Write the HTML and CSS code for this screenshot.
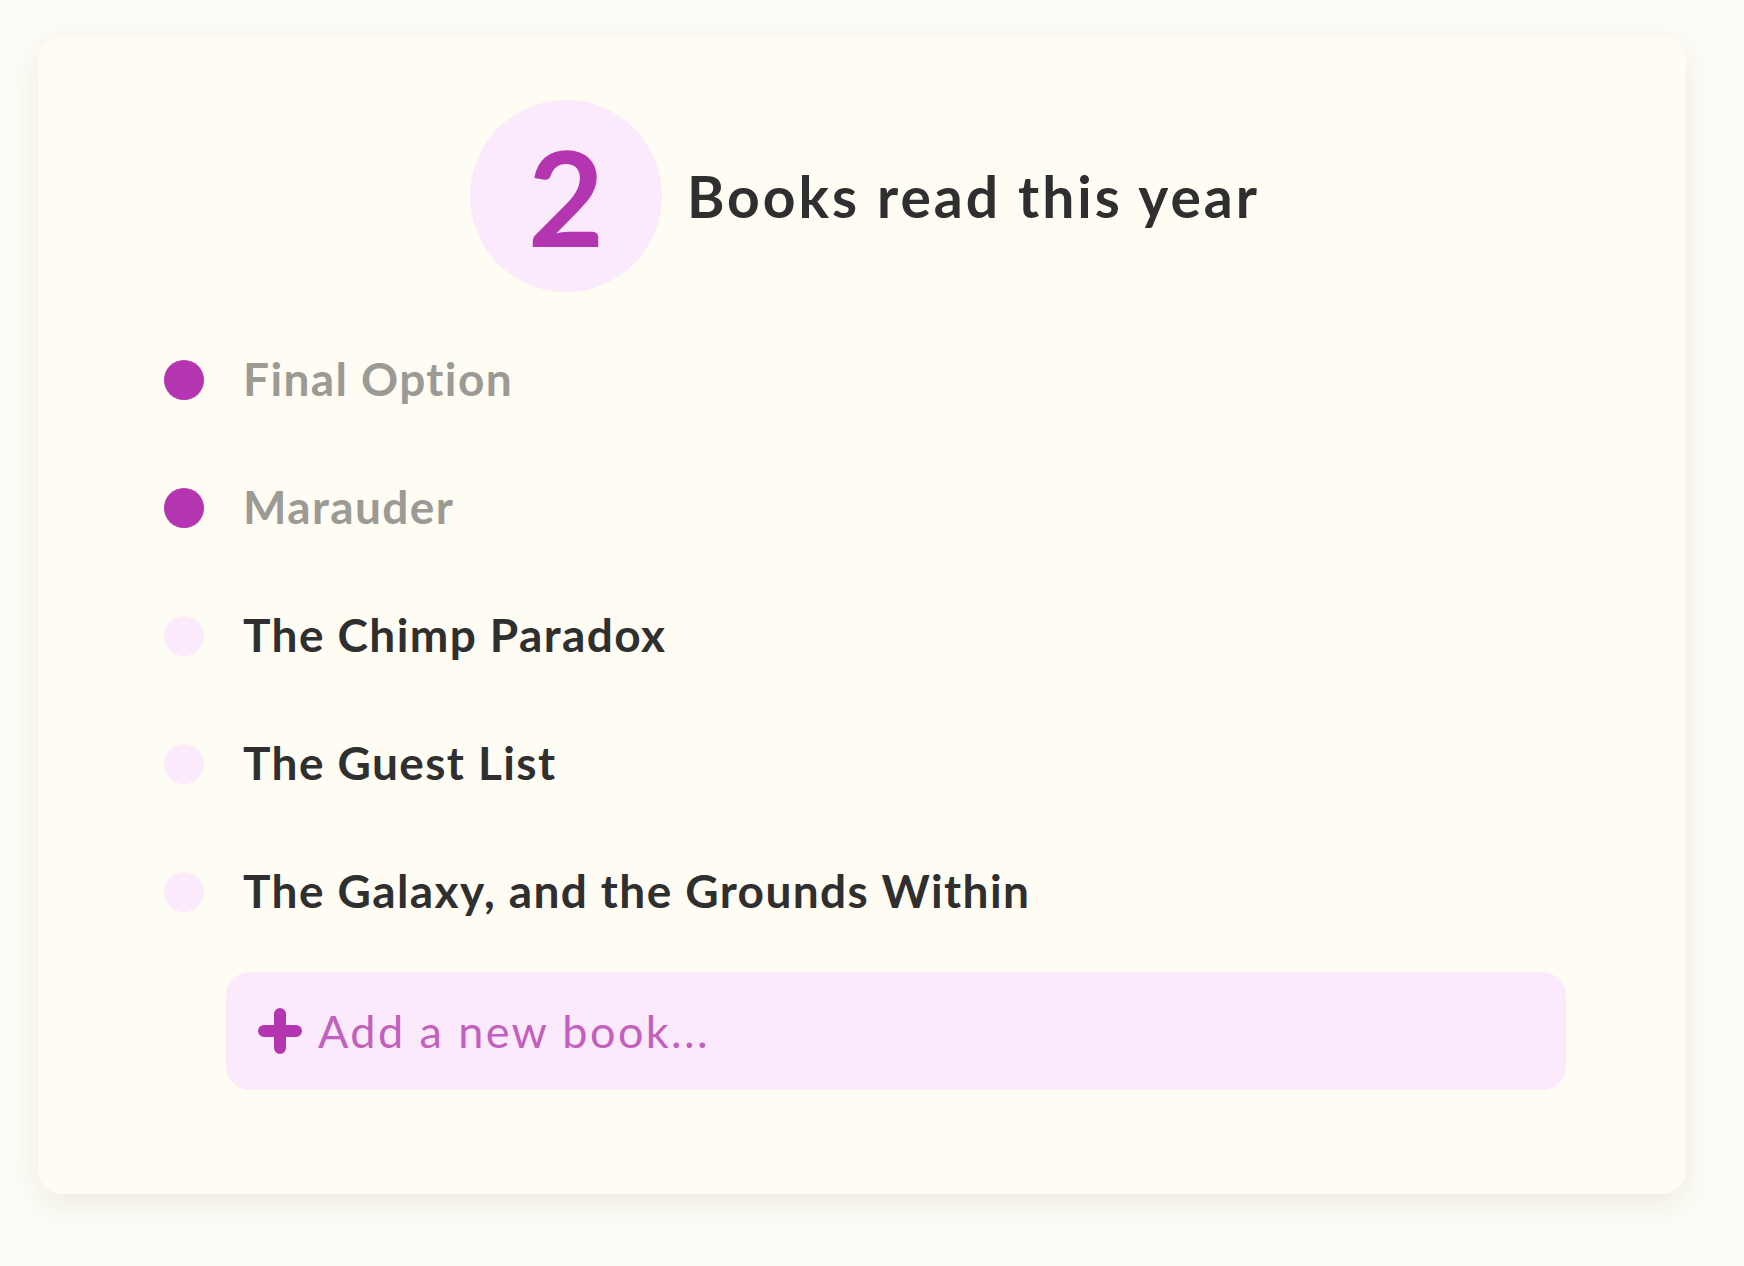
FILE: index.html
```html
<!DOCTYPE html>
<html lang="en">
<head>
<meta charset="utf-8">
<title>Books read this year</title>
<link rel="stylesheet" href="styles.css">
</head>
<body>
<main class="card">
  <header class="header">
    <div class="count">2</div>
    <h1 class="title">Books read this year</h1>
  </header>
  <ul class="books">
    <li class="book done"><span class="dot"></span><span class="name">Final Option</span></li>
    <li class="book done"><span class="dot"></span><span class="name">Marauder</span></li>
    <li class="book"><span class="dot"></span><span class="name">The Chimp Paradox</span></li>
    <li class="book"><span class="dot"></span><span class="name">The Guest List</span></li>
    <li class="book"><span class="dot"></span><span class="name">The Galaxy, and the Grounds Within</span></li>
  </ul>
  <button class="add">
    <svg class="plus" width="44" height="46" viewBox="0 0 44 46"><path d="M22 6 V40 M6 23 H38" stroke="#b435b0" stroke-width="12" stroke-linecap="round" fill="none"/></svg>
    <span class="add-label">Add a new book...</span>
  </button>
</main>
</body>
</html>
```
FILE: styles.css
```css
html, body {
  margin: 0;
  padding: 0;
}
body {
  background: #fdfcf6;
  font-family: Lato, "Open Sans", sans-serif;
  width: 1744px;
  height: 1266px;
  overflow: hidden;
}
.card {
  box-sizing: border-box;
  margin: 36px 0 0 38px;
  width: 1648px;
  height: 1158px;
  background: #fffcf3;
  border-radius: 24px;
  box-shadow: 0 10px 34px rgba(70, 60, 30, 0.09);
  padding: 64px 120px 0 126px;
}
.header {
  display: flex;
  align-items: center;
  justify-content: center;
  gap: 25px;
  height: 192px;
}
.count {
  width: 192px;
  height: 192px;
  border-radius: 50%;
  background: #fbeafb;
  color: #b435b0;
  font-size: 132px;
  font-weight: 700;
  display: flex;
  align-items: center;
  justify-content: center;
  line-height: 1;
}
.title {
  margin: 0;
  font-size: 57px;
  font-weight: 700;
  letter-spacing: 3px;
  color: #2f2f2f;
}
.books {
  list-style: none;
  margin: 24px 0 16px;
  padding: 0;
}
.book {
  display: flex;
  align-items: center;
  height: 128px;
  gap: 39px;
}
.dot {
  width: 40px;
  height: 40px;
  border-radius: 50%;
  background: #fbeafb;
  flex: none;
}
.name {
  font-size: 46px;
  font-weight: 700;
  letter-spacing: 1.4px;
  color: #2f2f2f;
  padding-bottom: 4px;
}
.done .dot {
  background: #b435b0;
}
.done .name {
  color: #9b9a95;
}
.add {
  display: flex;
  align-items: center;
  gap: 16px;
  margin-left: 62px;
  width: 1340px;
  height: 118px;
  border: none;
  border-radius: 24px;
  background: #fbeafb;
  padding: 0 0 0 32px;
  font-family: inherit;
  cursor: pointer;
}
.plus {
  flex: none;
}
.add-label {
  font-size: 45px;
  font-weight: 400;
  letter-spacing: 2.4px;
  color: #c25fbf;
}
```
